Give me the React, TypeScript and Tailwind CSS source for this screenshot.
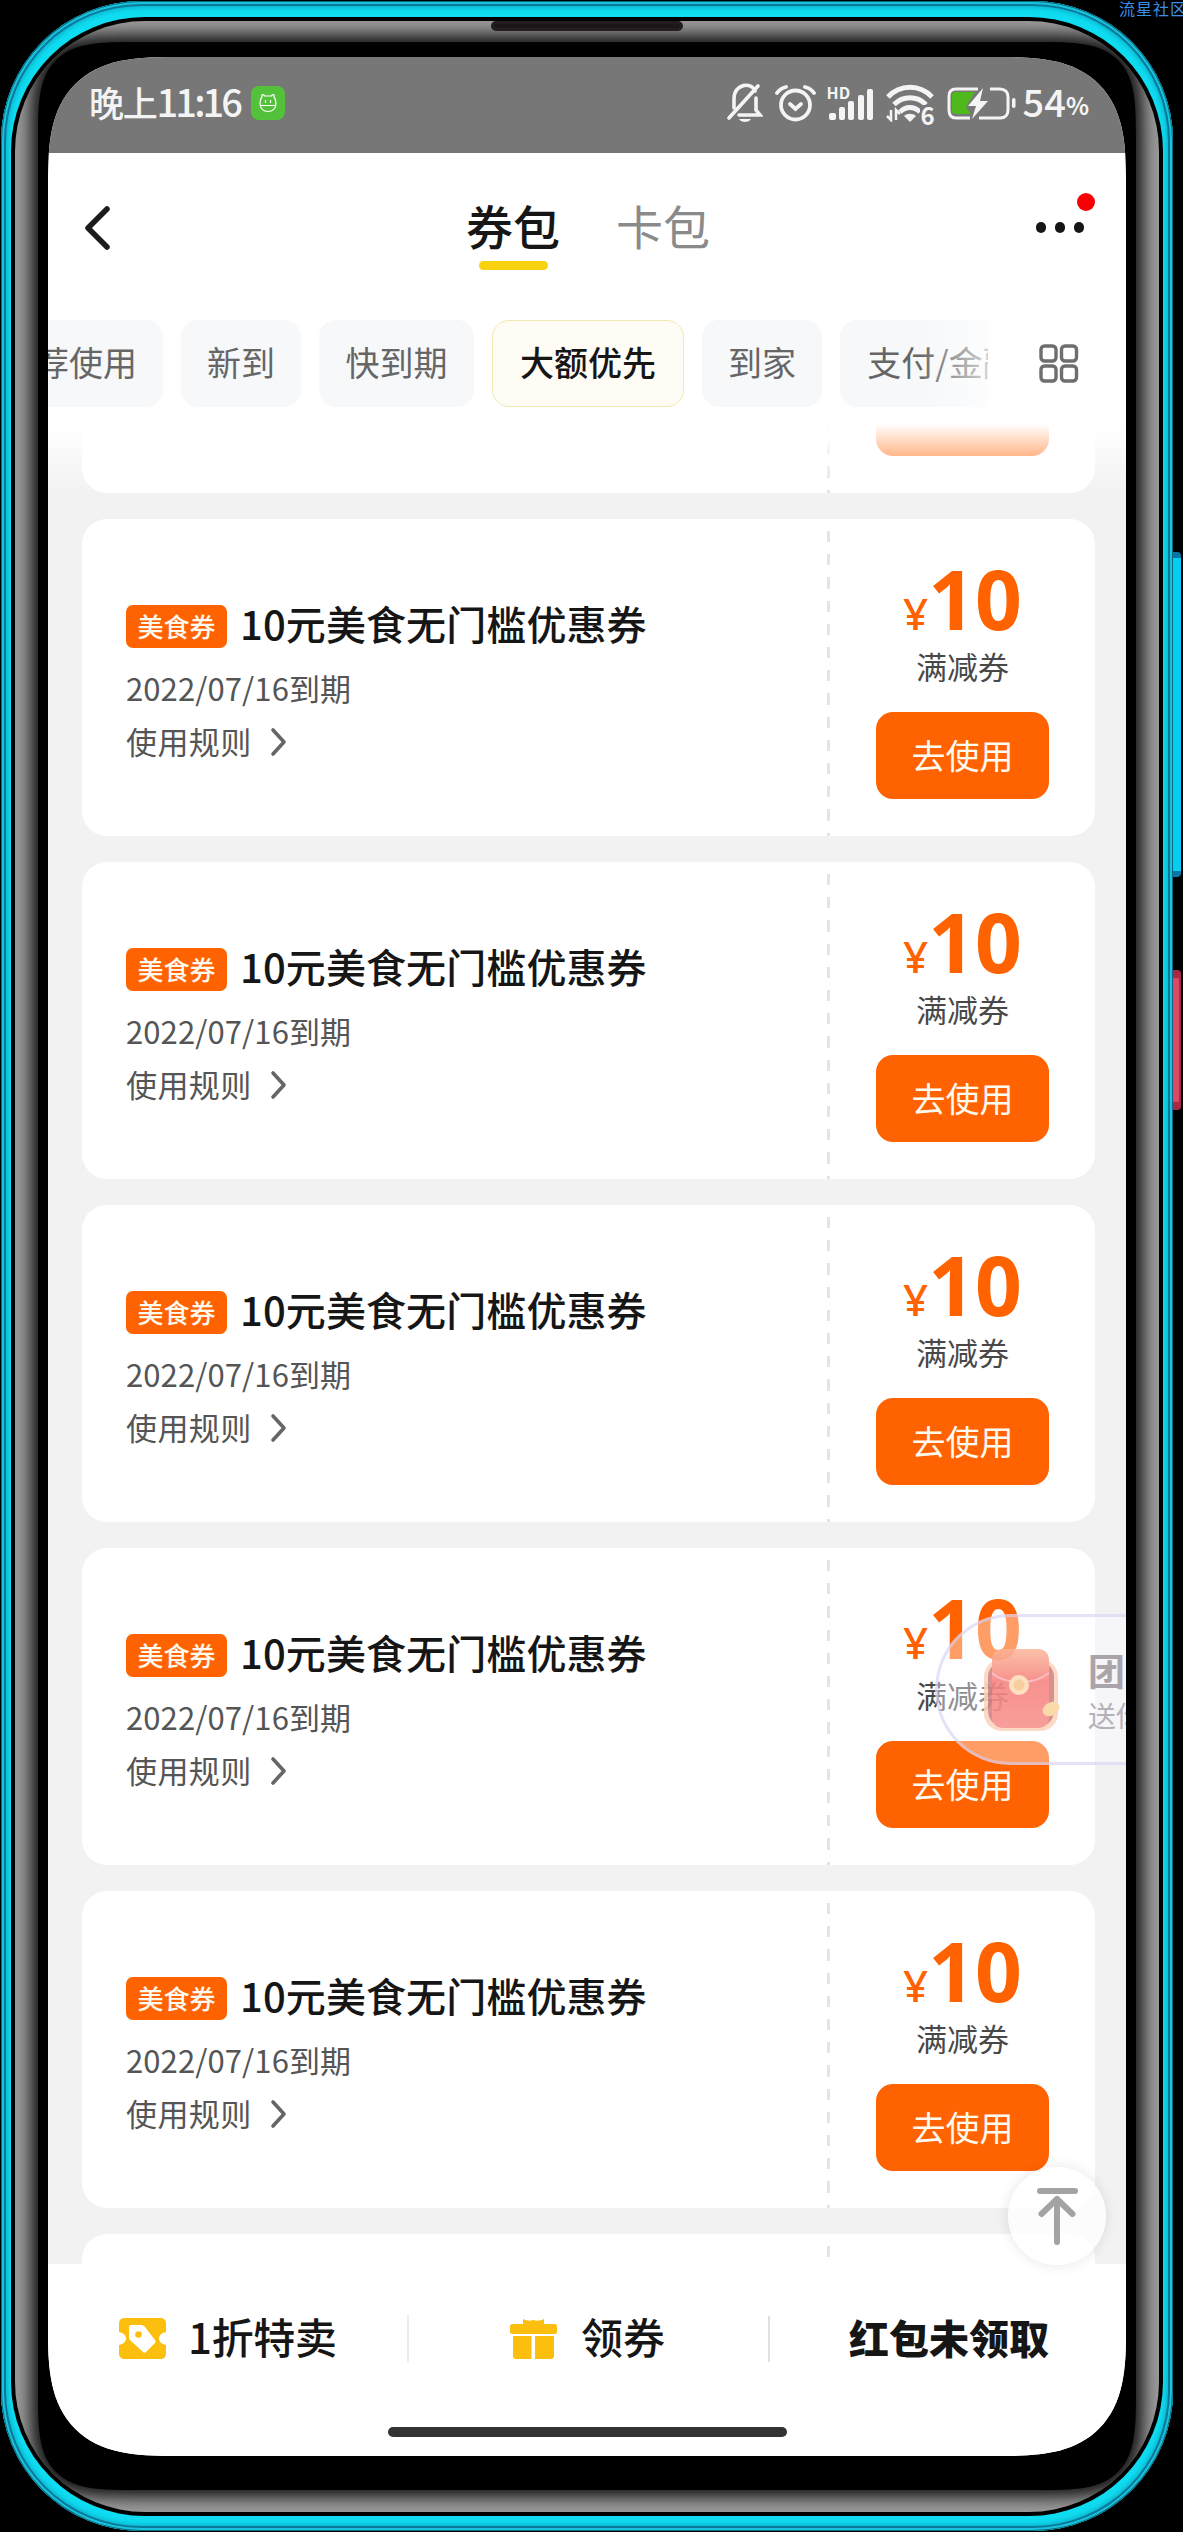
import React from 'react';

const FILTERS = [
    { label: '推荐使用', width: 'w-[188px] -ml-[73px]' },
    { label: '新到', width: 'w-[120px]' },
    { label: '快到期', width: 'w-[155px]' },
    { label: '大额优先', width: 'w-[192px]', active: true },
    { label: '到家', width: 'w-[120px]' },
    { label: '支付/金融', width: 'w-[204px]' },
];

const COUPONS = Array.from({ length: 5 }, (_, id) => ({
    id,
    tag: '美食券',
    title: '10元美食无门槛优惠券',
    expires: '2022/07/16到期',
    amount: 10,
    kind: '满减券',
}));

const StatusBar: React.FC = () => (
    <div className="h-[96px] shrink-0 bg-[#777777] text-[#f4f4f4] flex items-center justify-between pl-[41px] pr-[39px] pb-[5px]">
        <div className="flex items-center">
            <span className="pb-[3px] text-[35px] font-medium leading-none tracking-[-1.2px] whitespace-nowrap">晚上<span className="text-[38px] tracking-[-2.9px]">11:16</span></span>
            <span className="w-[34px] h-[34px] ml-[11px] rounded-[8px] bg-[#53c23a] flex items-center justify-center">
                <svg width="18" height="20" viewBox="0 0 18 20" fill="none" stroke="#fff" strokeWidth="1.2">
                    <path d="M3 4C2 1 5 1 5.500 3h7C13 1 16 1 15 4c1 1 2 4 2 6.500 0 5-3.500 8-8 8s-8-3-8-8C1 8 2 5 3 4z" />
                    <path d="M1 12.500h16M6.500 7v3M11.500 7v3" />
                </svg>
            </span>
        </div>
        <div className="flex items-center">
            <svg width="36" height="40" viewBox="0 0 36 40" fill="none" stroke="currentColor" strokeWidth="3.600" strokeLinecap="round">
                <path d="M7 25V16c0-16 18-17 21-8M29 15v12l4 5H12" />
                <path d="M31 3 2 35" />
                <path d="M12 36h12c-2 4-10 4-12 0z" fill="currentColor" stroke="none" />
            </svg>
            <svg className="ml-[12px]" width="41" height="38" viewBox="0 0 41 38" fill="none" stroke="currentColor" strokeWidth="3.800" strokeLinecap="round">
                <circle cx="20.500" cy="21" r="14.500" />
                <path d="M2 9c2-3 5-5 9-6M39 9c-2-3-5-5-9-6" />
                <path d="m15 20 5.500 5 5.500-5" />
            </svg>
            <span className="relative ml-[10px] w-[50px] h-[36px] flex items-end gap-[3.400px] pl-[3px] pb-[1px]">
                <b className="absolute left-[1px] top-[-1px] text-[16px] leading-none font-bold">HD</b>
                <i className="w-[7px] h-[7px] bg-current rounded-[2px]" />
                <i className="w-[6px] h-[13px] bg-current rounded-[2px]" />
                <i className="w-[6px] h-[19px] bg-current rounded-[2px]" />
                <i className="w-[6px] h-[25px] bg-current rounded-[2px]" />
                <i className="w-[6px] h-[31px] bg-current rounded-[2px]" />
            </span>
            <span className="relative ml-[10px] w-[49px] h-[38px]">
                <svg width="49" height="38" viewBox="0 0 49 38" fill="none" stroke="currentColor" strokeWidth="5">
                    <path d="M2 13c12-13 32-13 44 0M8 20.500c9-9 23-9 32 0M14 28c6-6 14-6 20 0" />
                    <path d="M18 32c3-3 9-3 12 0l-6 6z" fill="currentColor" stroke="none" />
                    <path d="M5 26v10l-4-4M10 36V26l4 4" strokeWidth="2.500" />
                </svg>
                <b className="absolute right-0 bottom-[-3px] text-[24px] leading-[24px] font-bold bg-[#777777] h-[20px] flex items-center">6</b>
            </span>
            <svg className="ml-[12px]" width="69" height="34" viewBox="0 0 69 34" fill="none">
                <path d="M31 3H9C4 3 2 6 2 10v14c0 5 2 8 7 8h14M43 3h10c5 0 8 3 8 8v13c0 5-3 8-8 8H32" stroke="currentColor" strokeWidth="3" />
                <path d="M9 6h19l-9 15 5 7H9c-3 0-4-1-4-4V10c0-3 1-4 4-4z" fill="#4fb81c" />
                <path d="M36 2 21 20h8l-4 13 16-18h-8z" fill="currentColor" />
                <rect x="65" y="12" width="3.500" height="10" rx="1.700" fill="currentColor" />
            </svg>
            <span className="ml-[7px] pb-[3px] text-[38px] font-medium leading-none">54</span>
            <span className="text-[24px] font-bold leading-none mt-[5px] tracking-[-2px]">%</span>
        </div>
    </div>
);

const Header: React.FC = () => (
    <div className="h-[167px] shrink-0 flex items-start justify-between pl-[36px] pr-[30px]">
        <svg className="mt-[52px]" width="28" height="46" viewBox="0 0 28 46" fill="none" stroke="#1c1c1c" strokeWidth="5.500" strokeLinecap="round" strokeLinejoin="round">
            <path d="M23 4 4 23l19 19" />
        </svg>
        <div className="flex gap-[56px] pl-[28px] mt-[40px] text-[47px] leading-[64px]">
            <div className="flex flex-col items-center">
                <span className="font-medium text-[#161616]">券包</span>
                <i className="w-[69px] h-[9px] mt-[4px] rounded-full bg-[#f8d210]" />
            </div>
            <span className="text-[#8a8a8a]">卡包</span>
        </div>
        <div className="relative mt-[69px] mr-[12px] flex gap-[9px]">
            <i className="w-[10px] h-[11px] rounded-full bg-[#161616]" />
            <i className="w-[10px] h-[11px] rounded-full bg-[#161616]" />
            <i className="w-[10px] h-[11px] rounded-full bg-[#161616]" />
            <i className="absolute w-[18px] h-[18px] right-[-11px] top-[-29px] rounded-full bg-[#fa0005]" />
        </div>
    </div>
);

const FilterBar: React.FC = () => (
    <div className="h-[100px] shrink-0 flex items-start">
        <div className="relative w-[940px] h-[87px] overflow-hidden flex gap-[18px]">
            {FILTERS.map(({ label, width, active }) => (
                <div
                    key={label}
                    className={`${width} h-[87px] shrink-0 pb-[4px] rounded-[17px] flex items-center justify-center text-[34px] whitespace-nowrap ${
                        active
                            ? 'bg-[#fffcf6] border-[1.5px] border-[#efe9ae] text-[#161616] font-medium'
                            : 'bg-[#f6f8fa] text-[#666666]'
                    }`}
                >
                    {label}
                </div>
            ))}
            <div className="absolute right-0 top-0 w-[70px] h-full bg-gradient-to-r from-white/0 to-white/70" />
        </div>
        <svg className="ml-[51px] mt-[24px]" width="40" height="39" viewBox="0 0 40 39" fill="none" stroke="#6e6e6e" strokeWidth="3.400">
            <rect x="2" y="2" width="15" height="15" rx="3.500" />
            <rect x="22.500" y="2" width="15" height="15" rx="3.500" />
            <rect x="2" y="22" width="15" height="15" rx="3.500" />
            <rect x="22.500" y="22" width="15" height="15" rx="3.500" />
        </svg>
    </div>
);

const CouponCard: React.FC<{ coupon: (typeof COUPONS)[number] }> = ({ coupon }) => (
    <div className="h-[317px] shrink-0 bg-white rounded-[25px] flex overflow-hidden">
        <div className="flex-1 pl-[44px] pt-[77px]">
            <div className="flex items-center h-[60px]">
                <span className="w-[101px] h-[43px] pb-[1px] rounded-[7px] bg-[#ff6200] text-[#fffaf0] text-[26px] font-medium leading-none flex items-center justify-center">{coupon.tag}</span>
                <span className="ml-[13px] pb-[6px] text-[40px] font-medium leading-none tracking-[0.1px] text-[#161616]">{coupon.title}</span>
            </div>
            <div className="h-[60px] mt-[2px] text-[31px] leading-[60px] tracking-[0.1px] text-[#555555]">{coupon.expires}</div>
            <div className="h-[50px] -mt-[2px] text-[31px] leading-[50px] text-[#555555] flex items-center">
                <span className="tracking-[0.4px]">使用规则</span>
                <svg className="ml-[18px] mt-[2px]" width="18" height="30" viewBox="0 0 18 30" fill="none" stroke="#666" strokeWidth="3.600" strokeLinecap="round" strokeLinejoin="round">
                    <path d="m3 3 11 12L3 27" />
                </svg>
            </div>
        </div>
        <div className="w-[3px] bg-[repeating-linear-gradient(to_bottom,transparent_0px,transparent_12px,#e4e4e4_12px,#e4e4e4_23.200px)]" />
        <div className="w-[265px] flex flex-col items-center pt-[38px]">
            <div className="h-[82px] flex items-baseline text-[#ff6200] font-['Noto_Sans',sans-serif]">
                <span className="text-[44px] leading-[82px] font-medium">¥</span>
                <span className="text-[82px] leading-[82px] font-bold">{coupon.amount}</span>
            </div>
            <div className="h-[50px] mt-[2px] text-[31px] leading-[50px] text-[#484848]">{coupon.kind}</div>
            <button className="w-[173px] h-[87px] mt-[21px] pb-[2px] rounded-[17px] bg-[#ff6200] text-[#fffaf0] text-[34px]">去使用</button>
        </div>
    </div>
);

// Tail of the card that is scrolled under the filter bar
const ScrolledCard: React.FC = () => (
    <div className="h-[73px] shrink-0 bg-white rounded-b-[25px] flex">
        <div className="flex-1" />
        <div className="w-[3px] bg-[repeating-linear-gradient(to_bottom,#e4e4e4_0px,#e4e4e4_11.200px,transparent_11.200px,transparent_23.200px)]" />
        <div className="w-[265px] flex justify-center">
            <div className="w-[173px] h-[36px] rounded-b-[17px] bg-[#ff6200]" />
        </div>
    </div>
);

// Head of the next card, the rest runs under the bottom bar
const NextCard: React.FC = () => (
    <div className="h-[86px] shrink-0 bg-white rounded-t-[25px] flex">
        <div className="flex-1" />
        <div className="w-[3px] h-[24px] mr-[265px] bg-[repeating-linear-gradient(to_bottom,transparent_0px,transparent_12px,#e4e4e4_12px,#e4e4e4_23.200px)]" />
    </div>
);

const RedPacket: React.FC = () => (
    <svg className="shrink-0 opacity-85" width="84" height="90" viewBox="0 0 84 90">
        <defs>
            <linearGradient id="packet" x1="0" y1="0" x2="0" y2="1">
                <stop offset="0" stopColor="#fcb79a" />
                <stop offset=".4" stopColor="#f67f7b" />
                <stop offset="1" stopColor="#f88e89" />
            </linearGradient>
        </defs>
        <rect x="3" y="14" width="74" height="72" rx="18" fill="#fbd3bc" />
        <rect x="7" y="16" width="66" height="66" rx="16" fill="#cf7f7d" />
        <rect x="11" y="4" width="57" height="79" rx="10" fill="url(#packet)" />
        <path d="M11 28c14 12 42 12 57 0" fill="none" stroke="#fab3b8" strokeWidth="2" />
        <circle cx="38" cy="40" r="10" fill="#fcdcb4" />
        <circle cx="38" cy="40" r="5.500" fill="#f7c58d" />
        <ellipse cx="70" cy="64" rx="9" ry="6.500" fill="#fbd49c" transform="rotate(-30 70 64)" />
    </svg>
);

const BottomBar: React.FC = () => (
    <div className="h-[192px] shrink-0 bg-white flex flex-col items-start justify-between pt-[45px] pb-[19px]">
        <div className="w-full h-[60px] flex items-center text-[42px] font-medium leading-none text-[#161616]">
            <div className="w-[359px] flex items-center pl-[71px] pb-[1px]">
                <svg width="47" height="41" viewBox="0 0 47 41">
                    <path d="M6 0h35c4 0 6 2 6 6v8c-5 1-7 4-7 6.500s2 5.500 7 6.500v8c0 4-2 6-6 6H6c-4 0-6-2-6-6v-8c5-1 7-4 7-6.500S5 15 0 14V6c0-4 2-6 6-6z" fill="#fdbf0d" />
                    <path d="M10 9c0-1 1-2 2-2h10c2 0 3 1 4 2l10 13c1 1 1 2 0 3l-9 9c-1 1-2 1-3 0L11 22c-1-1-1-2-1-3z" fill="#fff" />
                    <circle cx="19.500" cy="16.500" r="3.300" fill="#fdbf0d" />
                </svg>
                <span className="ml-[22px] pb-[5px] tracking-[-0.3px]">1折特卖</span>
            </div>
            <i className="w-[2px] h-[48px] bg-[#ebebeb]" />
            <div className="w-[359px] flex items-center pl-[101px] pb-[1px]">
                <svg width="47" height="40" viewBox="0 0 47 40" fill="#fdbf0d">
                    <path d="M13 0c4 2 7 2 10 1 4 1 7 1 11-1v5h11c1 0 2 1 2 2v6c0 1-1 2-2 2H2c-1 0-2-1-2-2V7c0-1 1-2 2-2h11z" />
                    <path d="M3 17h18.500v23H6c-2 0-3-1-3-3zM25 17h19v20c0 2-1 3-3 3H25z" />
                </svg>
                <span className="ml-[24px] pb-[5px]">领券</span>
            </div>
            <i className="w-[2px] h-[46px] bg-[#e0e0e0]" />
            <span className="ml-[79px] pb-[4px] text-[40px] font-black whitespace-nowrap">红包未领取</span>
        </div>
        <i className="w-[399px] h-[10px] rounded-full bg-[#333333] ml-[340px]" />
    </div>
);

const App: React.FC = () => (
    <div className="relative w-[1183px] h-[2532px] overflow-hidden bg-black pl-[1px] pt-[1px] font-['Noto_Sans_CJK_SC',sans-serif]">
        {/* side keys */}
        <div className="absolute right-[2px] top-[552px] w-[12px] h-[325px] rounded-[4px] bg-[#08cdf2] border-y-[6px] border-[#0877a8]" />
        <div className="absolute right-[2px] top-[970px] w-[12px] h-[140px] rounded-[4px] bg-[#dc4868] border-y-[8px] border-r-2 border-[#a92845]" />

        {/* phone body, from the metal edge to the glass */}
        <div className="relative w-[1172px] h-[2530px] rounded-[140px] px-[10px] pt-[16px] pb-[15px] bg-[#0fdcf0] shadow-[inset_0_0_0_1px_#0b6880,inset_0_0_0_3px_#18c4dc,inset_0_0_0_5px_#0a7898,inset_0_0_4px_7px_#0cb5d0]">
            <div className="w-full h-full rounded-[134px] bg-black p-[4px]">
                <div className="w-full h-full rounded-[130px] overflow-hidden bg-[#9a9a9a] px-[23px] pt-[21px] pb-[22px]">
                    <div className="w-full h-full rounded-[100px] [corner-shape:superellipse(1.8)] bg-black shadow-[0_0_16px_7px_#141414] px-[10px] pt-[15px] pb-[34px]">
                        <div className="relative w-full h-full rounded-[125px] [corner-shape:superellipse(1.5)] overflow-hidden bg-white flex flex-col">
                            <StatusBar />
                            <Header />
                            <FilterBar />
                            <div className="relative h-[1844px] shrink-0 overflow-hidden bg-[#f2f2f2] pl-[34px] pr-[31px]">
                                <div className="flex flex-col gap-[26px]">
                                    <ScrolledCard />
                                    {COUPONS.map(coupon => (
                                        <CouponCard key={coupon.id} coupon={coupon} />
                                    ))}
                                    <NextCard />
                                </div>
                                <div className="absolute inset-x-0 top-0 h-[74px] bg-gradient-to-b from-white from-5% to-white/0" />
                                <div className="absolute left-[887px] top-[1194px] w-[300px] h-[151px] rounded-l-full border-[3px] border-[#d9cff2]/60 bg-[#fdfbff]/40 flex items-center pl-[43px]">
                                    <RedPacket />
                                    <div className="ml-[23px] whitespace-nowrap">
                                        <div className="text-[37px] leading-[50px] font-bold text-[#aaa4aa]">团</div>
                                        <div className="text-[28px] leading-[40px] text-[#b5b1b8]">送你</div>
                                    </div>
                                </div>
                            </div>
                            <BottomBar />
                            <button className="absolute left-[960px] top-[2110px] w-[98px] h-[98px] rounded-full bg-white/80 shadow-[0_0_14px_rgba(0,0,0,0.1)] flex items-center justify-center">
                                <svg width="44" height="60" viewBox="0 0 44 60" fill="none" stroke="#a3a3a3" strokeWidth="6" strokeLinecap="round" strokeLinejoin="round">
                                    <path d="M5 5h35M22 13v43M6.500 28 22 13l15.500 15" />
                                </svg>
                            </button>
                        </div>
                    </div>
                </div>
            </div>
        </div>

        {/* earpiece */}
        <div className="absolute left-[491px] top-[21px] w-[192px] h-[10px] rounded-full bg-[#1b1718] border-[3px] border-[#231d1f]" />
        <div className="absolute left-[1119px] top-0 text-[16px] leading-[16px] tracking-[1px] whitespace-nowrap text-[#3c8fe6]">流星社区</div>
    </div>
);

export default App;
